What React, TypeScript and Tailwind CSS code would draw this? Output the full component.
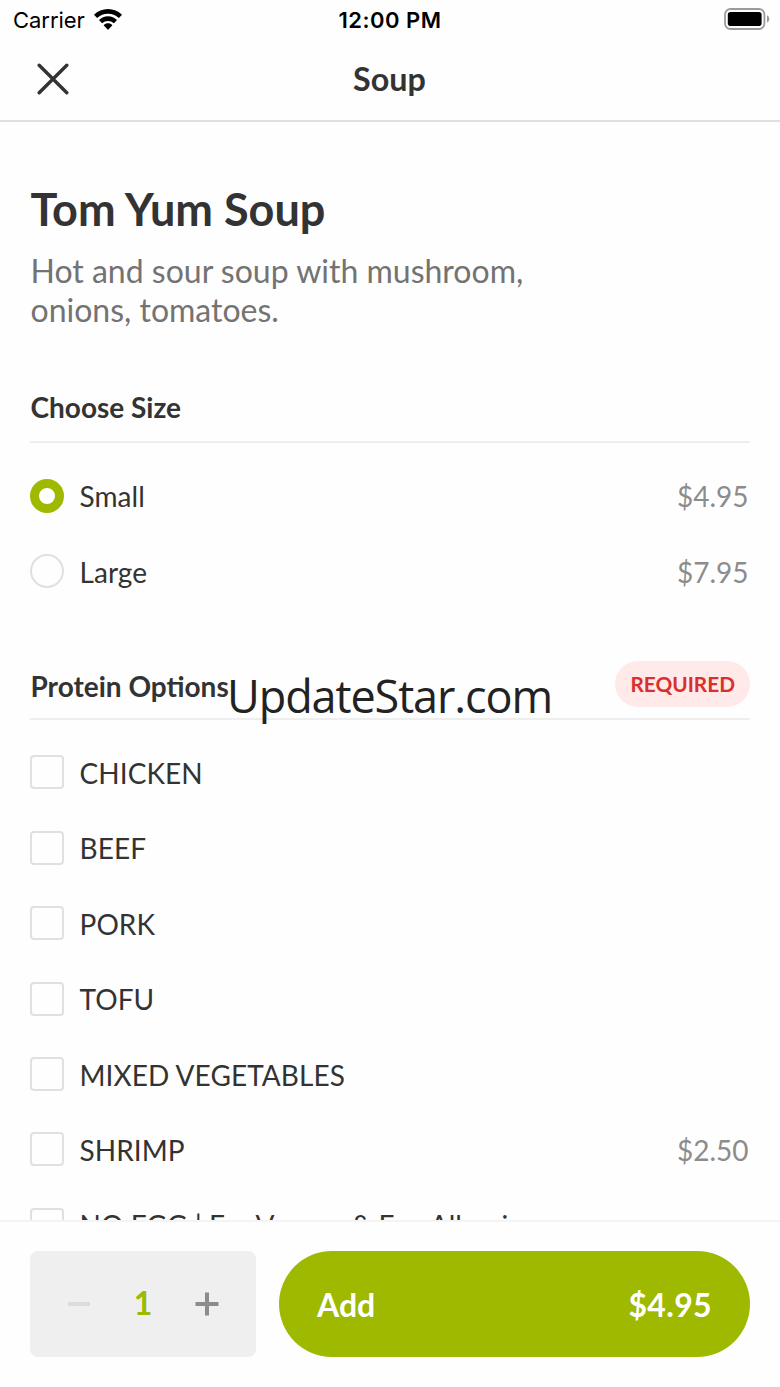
import React from 'react';
import clsx from 'clsx';

type Option = {
  label: string;
  price?: string;
};

const SIZES: Option[] = [
  { label: 'Small', price: '$4.95' },
  { label: 'Large', price: '$7.95' },
];

const PROTEINS: Option[] = [
  { label: 'CHICKEN' },
  { label: 'BEEF' },
  { label: 'PORK' },
  { label: 'TOFU' },
  { label: 'MIXED VEGETABLES' },
  { label: 'SHRIMP', price: '$2.50' },
  { label: 'NO EGG | For Vegans & Egg Allergies' },
];

const WifiIcon = () => (
  <svg width="28" height="21" viewBox="0 0 28 21" fill="#000">
    <path d="M14 0C19.4 0 24.3 2.1 28 5.7L24.9 9A16 16 0 0 0 3.1 9L0 5.7C3.7 2.1 8.6 0 14 0Z" />
    <path d="M14 7.2C17.5 7.2 20.6 8.6 23 10.9L19.9 14.2A9 9 0 0 0 8.1 14.2L5 10.9C7.4 8.6 10.5 7.2 14 7.2Z" />
    <path d="M14 14.2C15.6 14.2 17.1 14.8 18.2 15.9C18.4 16.1 18.4 16.3 18.2 16.5L14.4 20.5C14.2 20.8 13.8 20.8 13.6 20.5L9.8 16.5C9.6 16.3 9.6 16.1 9.8 15.9C10.9 14.8 12.4 14.2 14 14.2Z" />
  </svg>
);

const BatteryIcon = () => (
  <svg width="46" height="22" viewBox="0 0 46 22">
    <rect x="1" y="1" width="39.4" height="20" rx="5.4" fill="none" stroke="#9b9b9b" strokeWidth="1.8" />
    <rect x="3.8" y="3.9" width="33.8" height="14.2" rx="2.8" fill="#000" />
    <path d="M43 7.2a4.2 4.2 0 0 1 0 7.6z" fill="#9b9b9b" />
  </svg>
);

const CloseIcon = () => (
  <svg width="32" height="32" viewBox="0 0 32 32" stroke="#333" strokeWidth="3.4" strokeLinecap="round">
    <path d="M2.2 2.2 29.8 29.8M29.8 2.2 2.2 29.8" />
  </svg>
);

const StatusBar = () => (
  <div className="grid h-[38px] grid-cols-3 items-center pl-[13px] pr-[10px] font-['Inter',sans-serif] text-[22px] leading-none text-black">
    <div className="flex items-center gap-[9px]">
      <span className="pt-0.5 tracking-[-0.05px]">Carrier</span>
      <WifiIcon />
    </div>
    <span className="pr-[3px] pt-0.5 text-center font-semibold tracking-[0.5px]">12:00 PM</span>
    <div className="flex justify-end">
      <BatteryIcon />
    </div>
  </div>
);

const SectionTitle = ({ title, required }: { title: string; required?: boolean }) => (
  <div className="flex h-[60px] items-end justify-between border-b-2 border-[#eee]">
    <h2 className={clsx('pl-[0.5px] text-[28px] font-bold leading-none', required ? 'mb-[18px]' : 'mb-5')}>{title}</h2>
    {required && (
      <span className="mb-[11px] flex h-[46px] items-center rounded-full bg-[#ffe9e9] px-[15px] pt-px text-[20.8px] font-bold leading-none text-[#d9302c]">
        REQUIRED
      </span>
    )}
  </div>
);

const OptionRow = ({ option, round, checked }: { option: Option; round?: boolean; checked?: boolean }) => (
  <li className="flex h-[75.4px] items-center text-[28px] leading-none">
    <span
      className={clsx(
        'h-[34px] w-[34px] shrink-0',
        round ? 'rounded-full' : 'rounded-[4px]',
        checked ? 'border-[9.5px] border-[#9eb900] bg-white' : 'border-2 border-[#e0e0e0]',
      )}
    />
    <span className="ml-[15.5px] whitespace-nowrap pt-px tracking-[0.07px]">{option.label}</span>
    {option.price && <span className="ml-auto pr-[1.5px] pt-px text-[#8c8c8c]">{option.price}</span>}
  </li>
);

const App = (): React.ReactElement => (
  <div className="relative flex h-[1387px] w-[780px] flex-col overflow-hidden bg-[#fefefe] font-['Lato',sans-serif] text-[#333]">
    <header className="shrink-0 border-b-2 border-[#e0e0e0] pb-0.5">
      <StatusBar />
      <div className="grid h-20 grid-cols-3 items-center px-[37px]">
        <button aria-label="Close" className="w-8 pt-0.5">
          <CloseIcon />
        </button>
        <h1 className="pr-px pt-0.5 text-center text-[32.3px] font-bold leading-none">Soup</h1>
      </div>
    </header>

    <main className="min-h-0 flex-1 overflow-hidden px-[30px] pt-[59px]">
      <h2 className="pl-[0.5px] text-[45px] font-bold leading-[56px]">Tom Yum Soup</h2>
      <p className="mt-[15px] w-[520px] pl-[0.5px] text-[32px] leading-[38.5px] text-[#737373]">
        Hot and sour soup with mushroom, onions, tomatoes.
      </p>

      <section className="mt-[54px]">
        <SectionTitle title="Choose Size" />
        <ul className="pt-[15px]">
          {SIZES.map((option, i) => (
            <OptionRow key={option.label} option={option} round checked={i === 0} />
          ))}
        </ul>
      </section>

      <section className="mt-[51px]">
        <SectionTitle title="Protein Options" required />
        <ul className="pt-[15px]">
          {PROTEINS.map((option) => (
            <OptionRow key={option.label} option={option} />
          ))}
        </ul>
      </section>
    </main>

    <footer className="flex h-[167px] shrink-0 gap-[23px] border-t-2 border-[#f4f4f4] px-[30px] pt-[29px]">
      <div className="flex h-[106px] w-[226px] items-center justify-between rounded-[8px] bg-[#efefef] px-[37px]">
        <svg width="24" height="24" viewBox="0 0 24 24" stroke="#dcdcdc" strokeWidth="4">
          <path d="M1 12H23" />
        </svg>
        <span className="pb-0.5 text-[32px] font-bold leading-none text-[#9eb900]">1</span>
        <svg width="24" height="24" viewBox="0 0 24 24" stroke="#8c8c8c" strokeWidth="4">
          <path d="M.5 12H23.5M12 .5V23.5" />
        </svg>
      </div>
      <button className="flex h-[106px] flex-1 items-center justify-between rounded-full bg-[#9eb900] px-[38px] pt-px text-[32px] font-bold leading-none text-white">
        <span>Add</span>
        <span className="tracking-[0.35px]">$4.95</span>
      </button>
    </footer>

    <span className="absolute left-[227px] top-[666px] font-['Open_Sans',sans-serif] text-[45px] leading-[60px] tracking-[-1.1px] text-[#222]">
      UpdateStar.com
    </span>
  </div>
);

export default App;
